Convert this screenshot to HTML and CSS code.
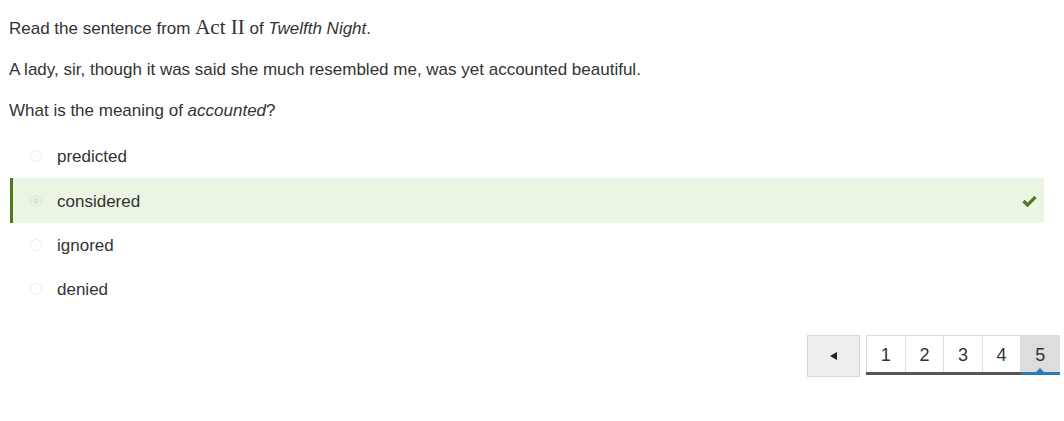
FILE: index.html
```html
<!DOCTYPE html>
<html>
<head>
<meta charset="utf-8">
<link rel="stylesheet" href="styles.css">
</head>
<body>
<div class="question">
  <p class="line">Read the sentence from <span class="serif">Act II</span> of <em>Twelfth Night</em>.</p>
  <p class="line">A lady, sir, though it was said she much resembled me, was yet accounted beautiful.</p>
  <p class="line">What is the meaning of <em>accounted</em>?</p>
</div>
<ul class="options">
  <li class="option"><span class="radio"></span><span class="label">predicted</span></li>
  <li class="option selected"><span class="radio checked"></span><span class="label">considered</span>
    <svg class="check" width="15" height="12" viewBox="0 0 15 12"><path d="M1.5 6 L5.5 10 L13.5 2" fill="none" stroke="#4e7d1b" stroke-width="3.2"/></svg>
  </li>
  <li class="option"><span class="radio"></span><span class="label">ignored</span></li>
  <li class="option"><span class="radio"></span><span class="label">denied</span></li>
</ul>
<div class="pager">
  <button class="prev"><svg width="8" height="8" viewBox="0 0 8 8"><path d="M0 4 L7 0 L7 8 Z" fill="#222"/></svg></button>
  <div class="pages">
    <span class="page">1</span>
    <span class="page">2</span>
    <span class="page">3</span>
    <span class="page">4</span>
    <span class="page active">5</span>
  </div>
</div>
</body>
</html>
```

FILE: styles.css
```css
html, body {
  margin: 0;
  padding: 0;
  background: #fff;
}
body {
  font-family: "Liberation Sans", Arial, sans-serif;
  font-size: 17px;
  color: #333;
}
.question {
  padding: 16px 0 0 9px;
}
.line {
  margin: 0 0 19px 0;
  line-height: 22px;
}
.line:last-child {
  margin-bottom: 0;
}
.serif {
  font-family: "Liberation Serif", "Times New Roman", serif;
  font-size: 21px;
  line-height: 22px;
}
.options {
  list-style: none;
  margin: 12px 0 0 10px;
  padding: 0;
  width: 1034px;
}
.option {
  display: flex;
  align-items: center;
  height: 44.4px;
  padding-left: 20px;
  border-left: 3px solid transparent;
  box-sizing: border-box;
}
.option.selected {
  background: #ebf5e3;
  border-left-color: #4f7a1f;
}
.radio {
  width: 12px;
  height: 12px;
  border-radius: 50%;
  border: 1px solid #eee;
  box-sizing: border-box;
  margin-left: -3px;
  margin-right: 15px;
  display: flex;
  align-items: center;
  justify-content: center;
}
.radio.checked {
  border-color: #dde6d6;
}
.radio.checked::after {
  content: "";
  width: 6px;
  height: 6px;
  border-radius: 50%;
  background: #dfe5da;
}
.label {
  flex: 1;
  padding-top: 2px;
}
.check {
  margin-right: 7px;
}
.pager {
  display: flex;
  justify-content: flex-end;
  align-items: flex-start;
  margin-top: 23px;
  padding-right: 4px;
  gap: 6px;
}
.prev {
  width: 53px;
  height: 42px;
  background: #eee;
  border: 1px solid #d8d8d8;
  display: flex;
  align-items: center;
  justify-content: center;
  padding: 0;
  margin: 0;
}
.pages {
  display: flex;
  width: 194px;
  border-top: 1px solid #ddd;
  border-bottom: 3px solid #555;
}
.page {
  flex: 1;
  height: 36px;
  line-height: 38px;
  text-align: center;
  font-size: 18px;
  color: #333;
  border-left: 1px solid #ddd;
  position: relative;
}
.page.active {
  background: #ddd;
  border-right: 1px solid #ddd;
}
.page.active::after {
  content: "";
  position: absolute;
  left: 0;
  right: -1px;
  bottom: -3px;
  height: 3px;
  background: #2b79b5;
}
.page.active::before {
  content: "";
  position: absolute;
  left: 50%;
  bottom: 0;
  margin-left: -4px;
  border-left: 4px solid transparent;
  border-right: 4px solid transparent;
  border-bottom: 4px solid #2b79b5;
}
```
